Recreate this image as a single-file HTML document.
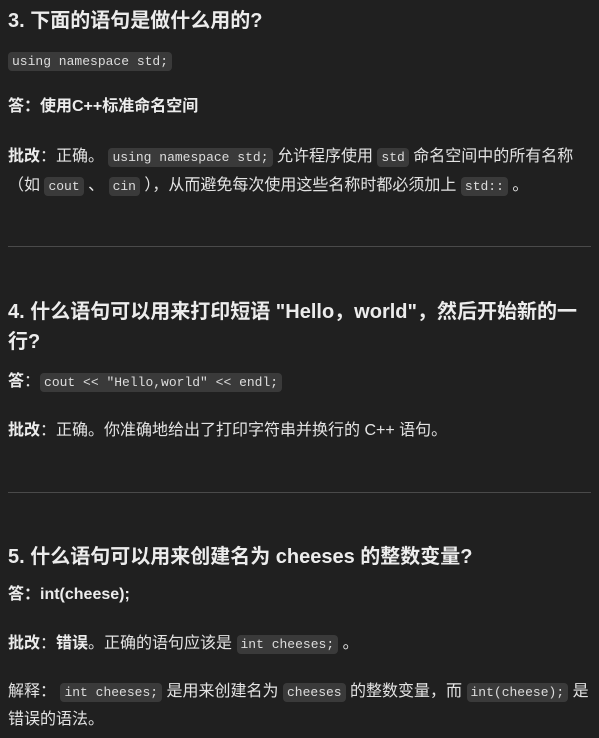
<!DOCTYPE html>
<html><head><meta charset="utf-8"><style>
body{margin:0;width:599px;height:738px;background:#202020;color:#e3e3e3;font-family:"Liberation Sans","Noto Sans CJK SC",sans-serif;font-size:16px;overflow:hidden;position:relative}
.l{position:absolute;left:8px;white-space:nowrap;line-height:22px}
h{font-weight:bold;font-size:20px;color:#ececec}
code{font-family:"Liberation Mono","DejaVu Sans Mono",monospace;font-size:13px;background:#3a3a3a;border-radius:4px;padding:2px 4px;color:#ddd}
b{font-weight:bold;color:#ececec}
.hr{position:absolute;left:8px;width:583px;height:1px;background:#4a4a4a}
</style></head><body>
<div class="l" style="top:10px"><h>3. 下面的语句是做什么用的?</h></div>
<div class="l" style="top:50px"><code>using namespace std;</code></div>
<div class="l" style="top:96px"><b>答：使用C++标准命名空间</b></div>
<div class="l" style="top:146px"><b>批改</b>：正确。 <code>using namespace std;</code> 允许程序使用 <code>std</code> 命名空间中的所有名称</div>
<div class="l" style="top:175px">（如 <code>cout</code> 、 <code>cin</code> ），从而避免每次使用这些名称时都必须加上 <code>std::</code> 。</div>
<div class="hr" style="top:246px"></div>
<div class="l" style="top:301px"><h>4. 什么语句可以用来打印短语 "Hello，world"，然后开始新的一</h></div>
<div class="l" style="top:331px"><h>行?</h></div>
<div class="l" style="top:371px"><b>答</b>：<code>cout &lt;&lt; "Hello,world" &lt;&lt; endl;</code></div>
<div class="l" style="top:420px"><b>批改</b>：正确。你准确地给出了打印字符串并换行的 C++ 语句。</div>
<div class="hr" style="top:492px"></div>
<div class="l" style="top:546px"><h>5. 什么语句可以用来创建名为 cheeses 的整数变量?</h></div>
<div class="l" style="top:584px"><b>答：int(cheese);</b></div>
<div class="l" style="top:633px"><b>批改</b>：<b>错误</b>。正确的语句应该是 <code>int cheeses;</code> 。</div>
<div class="l" style="top:681px">解释： <code>int cheeses;</code> 是用来创建名为 <code>cheeses</code> 的整数变量，而 <code>int(cheese);</code> 是</div>
<div class="l" style="top:709px">错误的语法。</div>
</body></html>
